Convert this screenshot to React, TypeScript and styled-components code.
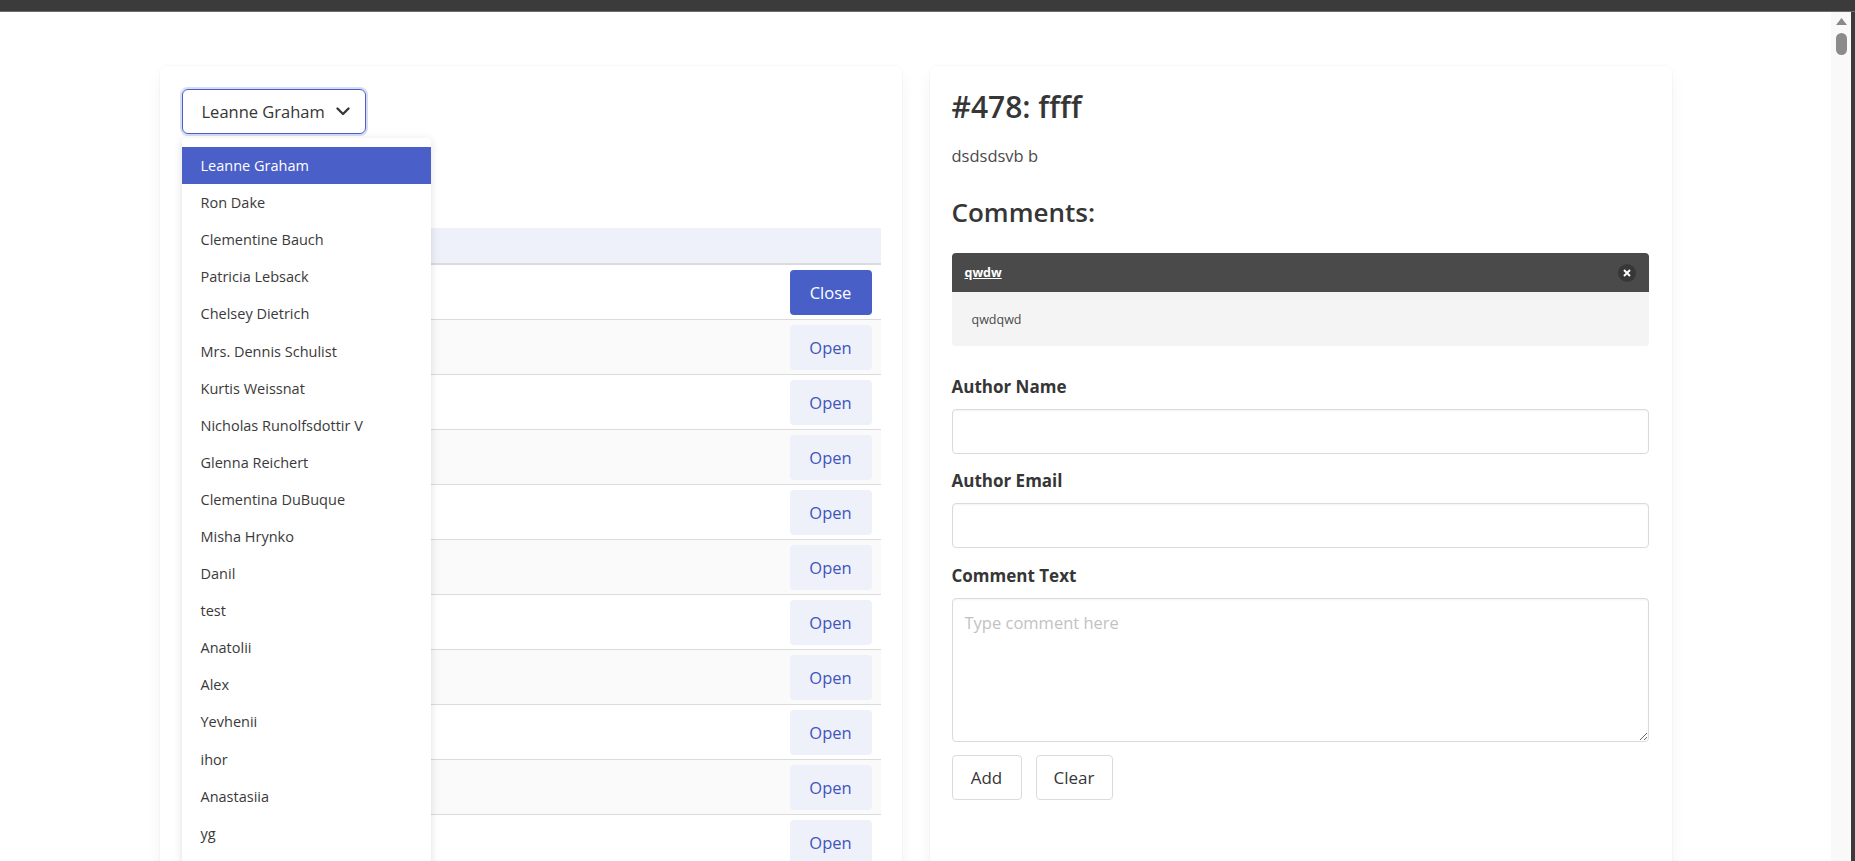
import React from "react";
import styled, { createGlobalStyle } from "styled-components";

const GlobalStyle = createGlobalStyle`
  html, body { margin: 0; padding: 0; height: 100%; overflow: hidden; background: #fff; }
  body { font-family: "Open Sans", "Noto Sans", sans-serif; color: #363636; }
  * { box-sizing: border-box; }
`;

const Shell = styled.div`
  height: 100vh;
  display: flex;
  flex-direction: column;
`;

const TopBar = styled.div`
  height: 12px;
  flex: none;
  background: #3b3b3b;
  border-bottom: 1px solid #6e6e6e;
`;

const Frame = styled.div`
  flex: 1;
  min-height: 0;
  display: flex;
`;

const Main = styled.main`
  flex: 1;
  overflow: hidden;
  padding-top: 54px;
`;

const ScrollTrack = styled.div`
  width: 20px;
  flex: none;
  background: #f9f9f9;
  display: flex;
  flex-direction: column;
  align-items: center;
  padding-top: 6px;
  gap: 8px;
`;

const ScrollThumb = styled.div`
  width: 11px;
  height: 22px;
  border-radius: 6px;
  background: #8b8b8b;
`;

const FrameEdge = styled.div`
  width: 4px;
  flex: none;
  background: #3b3b3b;
`;

const Container = styled.div`
  width: 1512px;
  margin: 0 auto;
  display: grid;
  grid-template-columns: 742px 742px;
  gap: 28px;
`;

const Card = styled.section<{ $padRight: number }>`
  background: #fff;
  border-radius: 6px;
  min-height: 900px;
  padding: 23px ${(p) => p.$padRight}px 22px 22px;
  box-shadow: 0 8px 16px -2px rgba(10, 10, 10, 0.07), 0 0 0 1px rgba(10, 10, 10, 0.02);
`;

const SelectWrap = styled.div`
  position: relative;
  width: 184px;
`;

const SelectBox = styled.div`
  height: 45px;
  border: 1px solid #485fc7;
  border-radius: 6px;
  box-shadow: 0 0 0 2px rgba(72, 95, 199, 0.22);
  display: flex;
  align-items: center;
  justify-content: space-between;
  padding: 0 15px 0 19px;
  font-size: 16.5px;
  color: #363636;
`;

const Menu = styled.ul`
  position: absolute;
  top: 49px;
  left: 0;
  width: 249px;
  margin: 0;
  padding: 9px 0 30px;
  list-style: none;
  background: #fff;
  border-radius: 4px;
  box-shadow: 0 2px 10px rgba(0, 0, 0, 0.13);
  z-index: 10;
`;

const MenuItem = styled.li<{ $active?: boolean }>`
  height: 37.1px;
  display: flex;
  align-items: center;
  padding-left: 19px;
  font-size: 14.5px;
  color: ${(p) => (p.$active ? "#fff" : "#3a3a3a")};
  background: ${(p) => (p.$active ? "#4a5fc7" : "transparent")};
`;

const Table = styled.table`
  width: 100%;
  margin-top: 94px;
  border-collapse: collapse;
`;

const HeadRow = styled.tr`
  background: #eef1fa;
  & > th {
    height: 36px;
    padding: 0;
    border-bottom: 2px solid #dbdbdb;
  }
`;

const Row = styled.tr`
  &:nth-child(even) { background: #fafafa; }
  & > td {
    border-bottom: 1px solid #dbdbdb;
    padding: 5px 9px 4px;
    height: 55px;
  }
`;

const ActionCell = styled.td`
  width: 100px;
  text-align: right;
`;

const RowButton = styled.button<{ $primary?: boolean }>`
  width: 82px;
  height: 45px;
  border: none;
  border-radius: 4px;
  font-family: inherit;
  font-size: 16.5px;
  color: ${(p) => (p.$primary ? "#fff" : "#3f55bd")};
  background: ${(p) => (p.$primary ? "#485fc7" : "#eef1fa")};
  display: block;
  margin-left: auto;
`;

const Title = styled.h1`
  margin: 0;
  font-size: 30px;
  line-height: 36px;
  font-weight: 600;
  color: #363636;
`;

const Body = styled.p`
  margin: 19px 0 0;
  font-size: 16.5px;
  line-height: 24px;
  color: #4a4a4a;
`;

const SubTitle = styled.h2`
  margin: 28px 0 0;
  font-size: 26px;
  line-height: 32px;
  font-weight: 600;
  color: #363636;
`;

const Message = styled.article`
  margin-top: 25px;
  border-radius: 4px;
  overflow: hidden;
  font-size: 12.5px;
`;

const MessageHeader = styled.div`
  height: 39px;
  background: #4a4a4a;
  color: #fff;
  display: flex;
  align-items: center;
  justify-content: space-between;
  padding: 0 13px;
  font-weight: 700;
  & > span { text-decoration: underline; }
`;

const DeleteButton = styled.button`
  width: 18px;
  height: 18px;
  border-radius: 50%;
  border: none;
  padding: 0;
  background: #373737;
  display: flex;
  align-items: center;
  justify-content: center;
`;

const MessageBody = styled.div`
  height: 54px;
  background: #f4f4f4;
  color: #4a4a4a;
  display: flex;
  align-items: center;
  padding-left: 20px;
`;

const Field = styled.div<{ $gap: number }>`
  margin-top: ${(p) => p.$gap}px;
`;

const Label = styled.label`
  display: block;
  font-size: 17px;
  line-height: 24px;
  font-weight: 700;
  color: #363636;
  margin-bottom: 10px;
`;

const Input = styled.input`
  display: block;
  width: 100%;
  height: 45px;
  border: 1px solid #dbdbdb;
  border-radius: 4px;
  box-shadow: inset 0 1px 2px rgba(10, 10, 10, 0.05);
  font-family: inherit;
  font-size: 17px;
  padding: 0 12px;
`;

const TextArea = styled.textarea`
  display: block;
  width: 100%;
  height: 144px;
  border: 1px solid #dbdbdb;
  border-radius: 4px;
  box-shadow: inset 0 1px 2px rgba(10, 10, 10, 0.05);
  font-family: inherit;
  font-size: 16.5px;
  line-height: 1.5;
  padding: 12px 12px;
  color: #363636;
  &::placeholder { color: #c2c2c2; }
`;

const Actions = styled.div`
  margin-top: 13px;
  display: flex;
  gap: 14px;
`;

const FormButton = styled.button<{ $w: number }>`
  width: ${(p) => p.$w}px;
  height: 45px;
  background: #fff;
  border: 1px solid #dbdbdb;
  border-radius: 4px;
  font-family: inherit;
  font-size: 17px;
  color: #363636;
`;

const users = [
  "Leanne Graham",
  "Ron Dake",
  "Clementine Bauch",
  "Patricia Lebsack",
  "Chelsey Dietrich",
  "Mrs. Dennis Schulist",
  "Kurtis Weissnat",
  "Nicholas Runolfsdottir V",
  "Glenna Reichert",
  "Clementina DuBuque",
  "Misha Hrynko",
  "Danil",
  "test",
  "Anatolii",
  "Alex",
  "Yevhenii",
  "ihor",
  "Anastasiia",
  "yg",
];

const rows = Array.from({ length: 11 }, (_, i) => i);

export default function App() {
  return (
    <Shell>
      <GlobalStyle />
      <TopBar />
      <Frame>
        <Main>
          <Container>
            <Card $padRight={21}>
              <SelectWrap>
                <SelectBox>
                  <span>Leanne Graham</span>
                  <svg width="14" height="9" viewBox="0 0 14 9" fill="none">
                    <path d="M1.5 1.5l5.5 5.5 5.5-5.5" stroke="#363636" strokeWidth="2.3" strokeLinecap="round" strokeLinejoin="round" />
                  </svg>
                </SelectBox>
                <Menu>
                  {users.map((u, i) => (
                    <MenuItem key={u} $active={i === 0}>
                      {u}
                    </MenuItem>
                  ))}
                </Menu>
              </SelectWrap>
              <Table>
                <thead>
                  <HeadRow>
                    <th />
                    <th />
                    <th />
                  </HeadRow>
                </thead>
                <tbody>
                  {rows.map((i) => (
                    <Row key={i}>
                      <td />
                      <td />
                      <ActionCell>
                        <RowButton $primary={i === 0}>{i === 0 ? "Close" : "Open"}</RowButton>
                      </ActionCell>
                    </Row>
                  ))}
                </tbody>
              </Table>
            </Card>
            <Card $padRight={23}>
              <Title>#478: ffff</Title>
              <Body>dsdsdsvb b</Body>
              <SubTitle>Comments:</SubTitle>
              <Message>
                <MessageHeader>
                  <span>qwdw</span>
                  <DeleteButton aria-label="delete">
                    <svg width="8" height="8" viewBox="0 0 8 8">
                      <path d="M1 1l6 6M7 1l-6 6" stroke="#fff" strokeWidth="2" />
                    </svg>
                  </DeleteButton>
                </MessageHeader>
                <MessageBody>qwdqwd</MessageBody>
              </Message>
              <Field $gap={29}>
                <Label>Author Name</Label>
                <Input />
              </Field>
              <Field $gap={15}>
                <Label>Author Email</Label>
                <Input />
              </Field>
              <Field $gap={16}>
                <Label>Comment Text</Label>
                <TextArea placeholder="Type comment here" />
              </Field>
              <Actions>
                <FormButton $w={70}>Add</FormButton>
                <FormButton $w={77}>Clear</FormButton>
              </Actions>
            </Card>
          </Container>
        </Main>
        <ScrollTrack>
          <svg width="11" height="7" viewBox="0 0 11 7">
            <path d="M5.5 0L11 7H0z" fill="#8a8a8a" />
          </svg>
          <ScrollThumb />
        </ScrollTrack>
        <FrameEdge />
      </Frame>
    </Shell>
  );
}
